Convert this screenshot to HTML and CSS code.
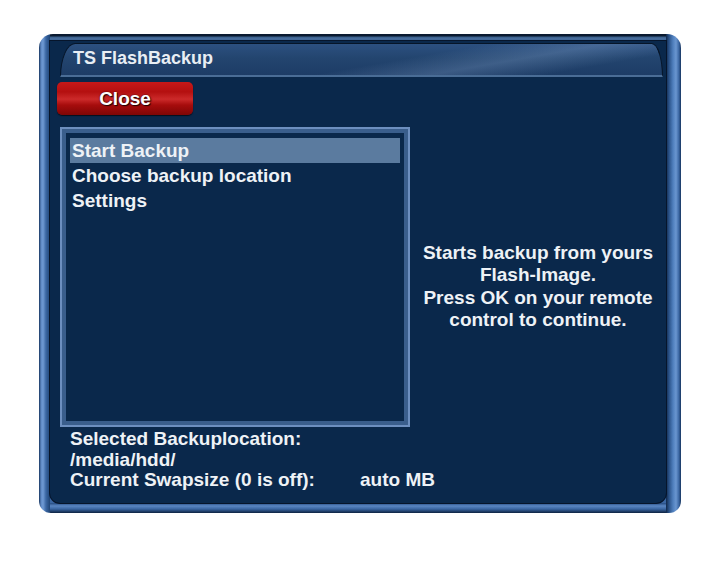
FILE: index.html
```html
<!DOCTYPE html>
<html>
<head>
<meta charset="utf-8">
<title>TS FlashBackup</title>
<link rel="stylesheet" href="styles.css">
</head>
<body>
<div class="frame">
  <div class="screen">
    <div class="titlebar"><span class="title">TS FlashBackup</span></div>
    <div class="btn-red">Close</div>
    <div class="main">
      <div class="listbox">
        <div class="row selected">Start Backup</div>
        <div class="row">Choose backup location</div>
        <div class="row">Settings</div>
      </div>
      <div class="desc">Starts backup from yours<br>Flash-Image.<br>Press OK on your remote<br>control to continue.</div>
    </div>
    <div class="info">
      <div class="info-line">Selected Backuplocation:</div>
      <div class="info-line">/media/hdd/</div>
      <div class="info-line split"><span class="label">Current Swapsize (0 is off):</span><span class="value">auto MB</span></div>
    </div>
  </div>
</div>
</body>
</html>
```

FILE: styles.css
```css
html, body {
  margin: 0;
  padding: 0;
  background: #ffffff;
}

body {
  font-family: "Liberation Sans", Arial, sans-serif;
  font-weight: bold;
  color: #eef2f6;
}

.frame {
  margin: 34px 0 0 39px;
  width: 642px;
  height: 479px;
  box-sizing: border-box;
  padding: 7px 15px 10px 11px;
  border-radius: 14px 14px 12px 12px;
  background:
    linear-gradient(90deg, #16345e 0, #5d88c4 2px, #6f9ad4 4px, #3a66a2 7px, #1f4475 11px) left top / 11px 100% no-repeat,
    linear-gradient(90deg, #10284a 0, #2a5288 3px, #4f7fbd 7px, #6a96d0 10px, #3a66a2 13px, #16345e 15px) right top / 15px 100% no-repeat,
    linear-gradient(180deg, #244a80 0, #5a86c2 3px, #3a66a2 6px, #0d2240 10px) left bottom / 100% 10px no-repeat,
    linear-gradient(180deg, #0a1a30 0, #0a1a30 2px, #3a5f8a 3px, #4a70a0 5px, #2f5080 7px) left top / 100% 7px no-repeat,
    #3a66a2;
}

.screen {
  height: 100%;
  box-sizing: border-box;
  background: #0a284b;
  border-radius: 0 0 10px 10px;
  box-shadow: 0 0 0 1px #06152b;
  display: flex;
  flex-direction: column;
}

.titlebar {
  margin: 2px 3px 0 10px;
  height: 34px;
  box-sizing: border-box;
  border: 1px solid #061528;
  border-bottom: 2px solid #4a6d96;
  border-radius: 16px 12px 0 0 / 36px 36px 0 0;
  background:
    linear-gradient(170deg, rgba(255,255,255,0) 55%, rgba(150,180,220,0.25) 70%, rgba(255,255,255,0) 85%),
    linear-gradient(180deg, #2c5080 0, #23456f 45%, #1d3c66 100%);
  display: flex;
  align-items: center;
  padding-bottom: 3px;
}

.title {
  padding-left: 12px;
  font-size: 18px;
  line-height: 28px;
  color: #e8eef4;
}

.btn-red {
  margin: 5px 0 0 7px;
  width: 136px;
  height: 33px;
  border-radius: 5px;
  background: linear-gradient(180deg, #c81818 0, #b41010 30%, #cc2a2a 52%, #a60c0c 70%, #7e0606 100%);
  box-shadow: 0 1px 1px #040e1c;
  font-size: 19px;
  line-height: 33px;
  text-align: center;
  color: #ffffff;
  text-shadow: 1px 1px 1px #200000, 0 0 2px #400000;
}

.main {
  display: flex;
  margin-top: 12px;
  margin-left: 10px;
}

.listbox {
  width: 350px;
  height: 300px;
  box-sizing: border-box;
  border: 2px solid #6d8fbf;
  box-shadow: inset 0 0 0 4px #3a5e8c;
  padding: 9px 8px 0 8px;
}

.row {
  height: 25px;
  line-height: 25px;
  padding-left: 2px;
  font-size: 19px;
  white-space: nowrap;
}

.row.selected {
  background: #5b7b9f;
}

.desc {
  flex: 1;
  padding-top: 115px;
  text-align: center;
  font-size: 19px;
  line-height: 22.3px;
}

.info {
  margin-top: 2px;
  padding-left: 20px;
  font-size: 19px;
}

.info-line {
  line-height: 20.5px;
  white-space: nowrap;
}

.split {
  display: flex;
}

.label {
  width: 290px;
}
```
